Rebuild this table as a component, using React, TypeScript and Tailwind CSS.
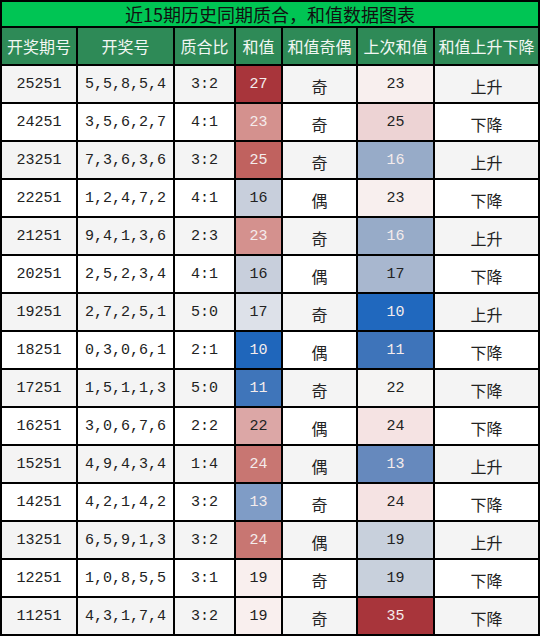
import React from "react";

type Cell = { v: string; cls: string };
type Row = {
  id: string;
  nums: string;
  ratio: string;
  sum: Cell;
  parity: string;
  prev: Cell;
  trend: string;
};

const L = "text-[#f4ecec]";
const D = "text-[#222]";

const rows: Row[] = [
  { id: "25251", nums: "5,5,8,5,4", ratio: "3:2", sum: { v: "27", cls: `bg-[#a8353b] ${L}` }, parity: "奇", prev: { v: "23", cls: `bg-[#f8efee] ${D}` }, trend: "上升" },
  { id: "24251", nums: "3,5,6,2,7", ratio: "4:1", sum: { v: "23", cls: `bg-[#d4918e] ${L}` }, parity: "奇", prev: { v: "25", cls: `bg-[#edd3d4] ${D}` }, trend: "下降" },
  { id: "23251", nums: "7,3,6,3,6", ratio: "3:2", sum: { v: "25", cls: `bg-[#c0625f] ${L}` }, parity: "奇", prev: { v: "16", cls: `bg-[#97abc8] ${L}` }, trend: "上升" },
  { id: "22251", nums: "1,2,4,7,2", ratio: "4:1", sum: { v: "16", cls: `bg-[#c8cfdc] ${D}` }, parity: "偶", prev: { v: "23", cls: `bg-[#f8efee] ${D}` }, trend: "下降" },
  { id: "21251", nums: "9,4,1,3,6", ratio: "2:3", sum: { v: "23", cls: `bg-[#d4918e] ${L}` }, parity: "奇", prev: { v: "16", cls: `bg-[#97abc8] ${L}` }, trend: "上升" },
  { id: "20251", nums: "2,5,2,3,4", ratio: "4:1", sum: { v: "16", cls: `bg-[#c8cfdc] ${D}` }, parity: "偶", prev: { v: "17", cls: `bg-[#a8b7cf] ${D}` }, trend: "下降" },
  { id: "19251", nums: "2,7,2,5,1", ratio: "5:0", sum: { v: "17", cls: `bg-[#dde1e9] ${D}` }, parity: "奇", prev: { v: "10", cls: `bg-[#2068be] ${L}` }, trend: "上升" },
  { id: "18251", nums: "0,3,0,6,1", ratio: "2:1", sum: { v: "10", cls: `bg-[#1f66bb] ${L}` }, parity: "偶", prev: { v: "11", cls: `bg-[#3e74ba] ${L}` }, trend: "下降" },
  { id: "17251", nums: "1,5,1,1,3", ratio: "5:0", sum: { v: "11", cls: `bg-[#3f75ba] ${L}` }, parity: "奇", prev: { v: "22", cls: `bg-[#f5f4f3] ${D}` }, trend: "下降" },
  { id: "16251", nums: "3,0,6,7,6", ratio: "2:2", sum: { v: "22", cls: `bg-[#dca7a6] ${D}` }, parity: "偶", prev: { v: "24", cls: `bg-[#f5e3e3] ${D}` }, trend: "下降" },
  { id: "15251", nums: "4,9,4,3,4", ratio: "1:4", sum: { v: "24", cls: `bg-[#c87672] ${L}` }, parity: "偶", prev: { v: "13", cls: `bg-[#6689bd] ${L}` }, trend: "上升" },
  { id: "14251", nums: "4,2,1,4,2", ratio: "3:2", sum: { v: "13", cls: `bg-[#7f9cc6] ${L}` }, parity: "奇", prev: { v: "24", cls: `bg-[#f5e3e3] ${D}` }, trend: "下降" },
  { id: "13251", nums: "6,5,9,1,3", ratio: "3:2", sum: { v: "24", cls: `bg-[#c87672] ${L}` }, parity: "偶", prev: { v: "19", cls: `bg-[#c8d0dc] ${D}` }, trend: "上升" },
  { id: "12251", nums: "1,0,8,5,5", ratio: "3:1", sum: { v: "19", cls: `bg-[#f9efee] ${D}` }, parity: "奇", prev: { v: "19", cls: `bg-[#c8d0dc] ${D}` }, trend: "下降" },
  { id: "11251", nums: "4,3,1,7,4", ratio: "3:2", sum: { v: "19", cls: `bg-[#f9efee] ${D}` }, parity: "奇", prev: { v: "35", cls: `bg-[#a8353b] ${L}` }, trend: "下降" },
];

const headers = ["开奖期号", "开奖号", "质合比", "和值", "和值奇偶", "上次和值", "和值上升下降"];

const MONO = "font-['Liberation_Mono','DejaVu_Sans_Mono',monospace]";
const CJK = "font-['Noto_Sans_CJK_SC','Noto_Sans',sans-serif]";

export default function App() {
  return (
    <div className="w-[540px] h-[636px] bg-black p-[2px]">
      <div className="grid grid-cols-[74px_95px_59px_45px_73px_75px_103px] grid-rows-[24px_36px_repeat(15,36px)] gap-[2px]">
        <div
          className={`col-span-7 bg-[#00c554] flex items-center justify-center text-[18px] text-[#111] leading-none ${CJK}`}
        >
          近15期历史同期质合，和值数据图表
        </div>
        {headers.map((h) => (
          <div
            key={h}
            className={`bg-[#2e8a57] flex items-center justify-center text-[#f2f7f3] text-[16px] leading-none ${CJK}`}
          >
            {h}
          </div>
        ))}
        {rows.map((r, i) => {
          const base = i % 2 === 0 ? "bg-[#f4f4f4]" : "bg-white";
          const num = `${base} flex items-center justify-center text-[15px] text-[#222] leading-none ${MONO}`;
          const zh = `${base} flex items-center justify-center text-[16px] text-[#222] leading-none pt-[3px] ${CJK}`;
          const colored = `flex items-center justify-center text-[15px] leading-none ${MONO}`;
          return (
            <React.Fragment key={r.id}>
              <div className={num}>{r.id}</div>
              <div className={num}>{r.nums}</div>
              <div className={num}>{r.ratio}</div>
              <div className={`${colored} ${r.sum.cls}`}>{r.sum.v}</div>
              <div className={zh}>{r.parity}</div>
              <div className={`${colored} ${r.prev.cls}`}>{r.prev.v}</div>
              <div className={zh}>{r.trend}</div>
            </React.Fragment>
          );
        })}
      </div>
    </div>
  );
}
